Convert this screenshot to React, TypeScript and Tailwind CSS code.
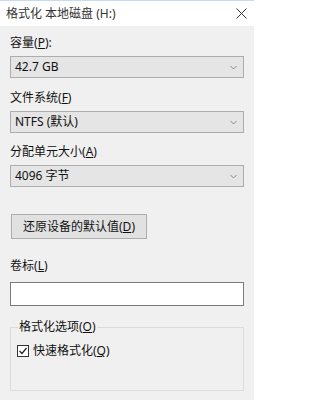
import React from 'react';

const font = "font-['Noto_Sans','Noto_Sans_CJK_SC',sans-serif]";

const Chevron: React.FC = () => (
  <svg width="7" height="5" viewBox="0 0 7 5">
    <path d="M0.5 1 L3.5 4 L6.5 1" fill="none" stroke="#8a8a8a" strokeWidth="1" />
  </svg>
);

const Label: React.FC<{ text: string; accel: string; suffix?: string }> = ({ text, accel, suffix = '' }) => (
  <div className="h-4 leading-4 text-[12px] text-[#111]">
    {text}(<span className="underline">{accel}</span>){suffix}
  </div>
);

const Combo: React.FC<{ value: string }> = ({ value }) => (
  <div className="flex h-[22px] items-center justify-between border border-[#adadad] bg-[#e5e5e5] pl-[4px] pr-[6px]">
    <span className="text-[12px] leading-4 text-[#111]">{value}</span>
    <Chevron />
  </div>
);

export default function App() {
  return (
    <div className={`h-[400px] w-[254px] overflow-hidden bg-[#f0f0f0] ${font}`}>
      <div className="flex h-[26px] items-center justify-between border-t border-[#c5dcf0] bg-white pl-[6px] pr-[7px]">
        <span className="text-[12px] leading-4 text-[#333]">格式化 本地磁盘 (H:)</span>
        <svg width="11" height="11" viewBox="0 0 11 11">
          <path d="M0.5 0.5 L10.5 10.5 M10.5 0.5 L0.5 10.5" stroke="#333" strokeWidth="1" />
        </svg>
      </div>

      <div className="flex flex-col px-[10px] pt-[9px]">
        <Label text="容量" accel="P" suffix=":" />
        <div className="mt-[5px]">
          <Combo value="42.7 GB" />
        </div>

        <div className="mt-[12px]">
          <Label text="文件系统" accel="F" />
        </div>
        <div className="mt-[5px]">
          <Combo value="NTFS (默认)" />
        </div>

        <div className="mt-[11px]">
          <Label text="分配单元大小" accel="A" />
        </div>
        <div className="mt-[5px]">
          <Combo value="4096 字节" />
        </div>

        <button className="ml-[1px] mt-[27px] flex h-[25px] w-[136px] items-center justify-center border border-[#adadad] bg-[#e1e1e1] text-[12px] leading-4 text-[#111]">
          还原设备的默认值(<span className="underline">D</span>)
        </button>

        <div className="mt-[19px]">
          <Label text="卷标" accel="L" />
        </div>
        <div className="mt-[8px] h-[24px] border border-[#7a7a7a] bg-white" />

        <fieldset className="mt-[13px] h-[72px] border border-[#dcdcdc] px-[6px]">
          <legend className="ml-[1px] px-[1px] text-[12px] leading-4 text-[#111]">
            格式化选项(<span className="underline">O</span>)
          </legend>
          <div className="mt-[8px] flex items-center gap-[4px]">
            <svg width="12" height="12" viewBox="0 0 12 12">
              <rect x="0.5" y="0.5" width="11" height="11" fill="white" stroke="#333" />
              <path d="M2.5 6 L5 8.5 L9.5 3" fill="none" stroke="#222" strokeWidth="1.2" />
            </svg>
            <span className="text-[12px] leading-4 text-[#111]">
              快速格式化(<span className="underline">Q</span>)
            </span>
          </div>
        </fieldset>
      </div>
    </div>
  );
}
